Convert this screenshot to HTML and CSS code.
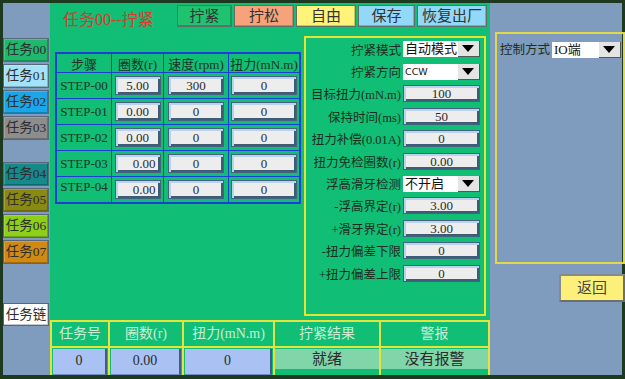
FILE: index.html
```html
<!DOCTYPE html>
<html lang="zh">
<head>
<meta charset="utf-8">
<title>任务00--拧紧</title>
<link rel="stylesheet" href="styles.css">
</head>
<body>
<div class="screen">
  <aside class="tasks">
    <div class="tab t00">任务00</div>
    <div class="tab t01">任务01</div>
    <div class="tab t02">任务02</div>
    <div class="tab t03">任务03</div>
    <div class="tab t04 group2">任务04</div>
    <div class="tab t05">任务05</div>
    <div class="tab t06">任务06</div>
    <div class="tab t07">任务07</div>
    <div class="tab chain">任务链</div>
  </aside>

  <main class="main">
    <header class="top">
      <h1 class="title">任务00--拧紧</h1>
      <nav class="modes">
        <div class="mode m-tight">拧紧</div>
        <div class="mode m-loose">拧松</div>
        <div class="mode m-free">自由</div>
        <div class="mode m-save">保存</div>
        <div class="mode m-reset">恢复出厂</div>
      </nav>
    </header>

    <section class="mid">
      <div class="steps">
        <div class="cell th">步骤</div>
        <div class="cell th">圈数(r)</div>
        <div class="cell th">速度(rpm)</div>
        <div class="cell th">扭力(mN.m)</div>

        <div class="cell step">STEP-00</div>
        <div class="cell"><div class="inp w-turn">5.00</div></div>
        <div class="cell"><div class="inp w-speed">300</div></div>
        <div class="cell"><div class="inp w-torque">0</div></div>

        <div class="cell step">STEP-01</div>
        <div class="cell"><div class="inp w-turn">0.00</div></div>
        <div class="cell"><div class="inp w-speed">0</div></div>
        <div class="cell"><div class="inp w-torque">0</div></div>

        <div class="cell step">STEP-02</div>
        <div class="cell"><div class="inp w-turn">0.00</div></div>
        <div class="cell"><div class="inp w-speed">0</div></div>
        <div class="cell"><div class="inp w-torque">0</div></div>

        <div class="cell step">STEP-03</div>
        <div class="cell"><div class="inp w-turn right">0.00</div></div>
        <div class="cell"><div class="inp w-speed">0</div></div>
        <div class="cell"><div class="inp w-torque">0</div></div>

        <div class="cell step top-al">STEP-04</div>
        <div class="cell"><div class="inp w-turn right">0.00</div></div>
        <div class="cell"><div class="inp w-speed">0</div></div>
        <div class="cell"><div class="inp w-torque">0</div></div>
      </div>

      <div class="settings">
        <span class="lbl">拧紧模式</span>
        <div class="sel">自动模式<span class="arr"></span></div>
        <span class="lbl">拧紧方向</span>
        <div class="sel small">CCW<span class="arr"></span></div>
        <span class="lbl">目标扭力(mN.m)</span>
        <div class="inp s">100</div>
        <span class="lbl">保持时间(ms)</span>
        <div class="inp s">50</div>
        <span class="lbl">扭力补偿(0.01A)</span>
        <div class="inp s">0</div>
        <span class="lbl">扭力免检圈数(r)</span>
        <div class="inp s">0.00</div>
        <span class="lbl">浮高滑牙检测</span>
        <div class="sel">不开启<span class="arr"></span></div>
        <span class="lbl">-浮高界定(r)</span>
        <div class="inp s">3.00</div>
        <span class="lbl">+滑牙界定(r)</span>
        <div class="inp s">3.00</div>
        <span class="lbl">-扭力偏差下限</span>
        <div class="inp s">0</div>
        <span class="lbl">+扭力偏差上限</span>
        <div class="inp s">0</div>
      </div>
    </section>

    <section class="status">
      <div class="sh">任务号</div>
      <div class="sh">圈数(r)</div>
      <div class="sh">扭力(mN.m)</div>
      <div class="sh">拧紧结果</div>
      <div class="sh">警报</div>
      <div class="sv"><div class="val blue">0</div></div>
      <div class="sv"><div class="val blue">0.00</div></div>
      <div class="sv"><div class="val blue">0</div></div>
      <div class="sv"><div class="val pale">就绪</div></div>
      <div class="sv"><div class="val pale">没有报警</div></div>
    </section>
  </main>

  <aside class="side">
    <div class="ctrl">
      <span class="lbl">控制方式</span>
      <div class="sel io">IO端<span class="arr"></span></div>
    </div>
    <div class="back">返回</div>
  </aside>
</div>
</body>
</html>
```

FILE: styles.css
```css
html, body {
  margin: 0;
  padding: 0;
}
body {
  width: 625px;
  height: 379px;
  overflow: hidden;
  font-family: "Liberation Serif", "Noto Sans CJK SC", serif;
  color: #2a2a2a;
}
.screen {
  box-sizing: border-box;
  width: 625px;
  height: 379px;
  border: 3px solid #1d3a20;
  border-bottom-width: 4px;
  display: flex;
  background: #7f9bbe;
}

/* left task tabs */
.tasks {
  width: 47px;
  flex: none;
  display: flex;
  flex-direction: column;
  gap: 2px;
  padding-top: 35px;
}
.tab {
  box-sizing: border-box;
  width: 46px;
  height: 24px;
  border: 1px solid #58687a;
  box-shadow: inset -1px -1px 0 rgba(0,0,0,.22), inset 1px 1px 0 rgba(255,255,255,.18);
  font-size: 13.5px;
  line-height: 22px;
  text-align: center;
  color: #2e2e2e;
  white-space: nowrap;
}
.t00 { background: #1fb86c; }
.t01 { background: #a2e3f9; }
.t02 { background: #1aa6e8; }
.t03 { background: #8d8d8d; }
.t04 { background: #148a8a; }
.t05 { background: #8a8a12; }
.t06 { background: #8cd01a; }
.t07 { background: #d08a14; }
.group2 { margin-top: 20px; }
.chain { background: #ffffff; margin-top: 37px; height: 23px; }

/* main green area */
.main {
  width: 440px;
  flex: none;
  background: #10be76;
  display: flex;
  flex-direction: column;
}
.top {
  height: 29px;
  display: flex;
  align-items: flex-start;
  padding-left: 13px;
  padding-right: 3px;
}
.title {
  margin: 7px 0 0;
  font-size: 16px;
  font-weight: normal;
  color: #d93a2a;
  line-height: 20px;
  white-space: nowrap;
}
.modes {
  margin-left: auto;
  margin-top: 2px;
  display: flex;
  gap: 2px;
}
.mode {
  box-sizing: border-box;
  height: 22px;
  border: 1px solid #5f6f68;
  box-shadow: inset -1px -1px 0 rgba(0,0,0,.2);
  font-size: 15px;
  line-height: 20px;
  text-align: center;
  color: #333;
}
.m-tight { width: 55px; background: #1fc26f; }
.m-loose { width: 60px; background: #f7a27b; }
.m-free  { width: 60px; background: #fff37a; }
.m-save  { width: 57px; background: #92d8f8; }
.m-reset { width: 70px; background: #92d8f8; }

.mid {
  height: 288px;
  display: flex;
  align-items: flex-start;
}

/* steps table */
.steps {
  margin: 20px 0 0 5px;
  display: grid;
  grid-template-columns: 54px 51px 64px 70px;
  grid-template-rows: 18px repeat(5, 25px);
  gap: 1px;
  border: 2px solid #1e3fd6;
  background: #1e3fd6;
}
.cell {
  background: #10be76;
  display: flex;
  align-items: center;
  justify-content: center;
  font-size: 13px;
  color: #1d3323;
  white-space: nowrap;
}
.th { font-size: 13px; }
.step { font-size: 13px; }
.top-al { align-items: flex-start; padding-top: 2px; }

.inp {
  box-sizing: border-box;
  height: 19px;
  background: #ededed;
  border: 1px solid #45627e;
  box-shadow: inset 2px 2px 0 #b9d3ec, inset -2px -2px 0 #3e5c76;
  font-size: 13px;
  line-height: 17px;
  text-align: center;
  color: #2a2a2a;
}
.w-turn { width: 46px; }
.w-speed { width: 56px; }
.w-torque { width: 66px; }
.right { text-align: right; padding-right: 4px; }

/* settings panel */
.settings {
  box-sizing: border-box;
  margin: 4px 4px 0 auto;
  width: 182px;
  height: 280px;
  border: 2px solid #e4e432;
  display: grid;
  grid-template-columns: 95px 77px;
  column-gap: 2px;
  grid-auto-rows: 22.4px;
  align-items: center;
  padding-top: 0;
}
.lbl {
  font-size: 12.5px;
  text-align: right;
  white-space: nowrap;
  color: #1c2e20;
}
.inp.s {
  width: 77px;
  height: 17px;
  line-height: 15px;
}
.sel {
  box-sizing: border-box;
  position: relative;
  height: 16px;
  background: #ffffff;
  font-size: 13px;
  line-height: 16px;
  padding-left: 2px;
  color: #111;
  white-space: nowrap;
}
.sel.small { font-family: "DejaVu Sans", sans-serif; font-size: 9.5px; }
.arr {
  position: absolute;
  right: 0;
  top: 0;
  box-sizing: border-box;
  width: 22px;
  height: 16px;
  background: #e4e4e4;
  border-right: 1px solid #555;
  border-bottom: 1px solid #555;
}
.arr::after {
  content: "";
  position: absolute;
  left: 4px;
  top: 4px;
  border-left: 6px solid transparent;
  border-right: 6px solid transparent;
  border-top: 7px solid #000;
}

/* bottom status */
.status {
  margin-top: auto;
  display: grid;
  grid-template-columns: 56px 72px 89px 104px 107px;
  grid-template-rows: 24px 27px;
  gap: 2px;
  padding: 2px 2px 0 2px;
  background: #e4e43a;
}
.sh, .sv { background: #10be76; }
.sh {
  font-size: 14px;
  line-height: 24px;
  text-align: center;
  color: #cdeed6;
  white-space: nowrap;
}
.sv { display: flex; flex-direction: column; }
.val {
  font-size: 14px;
  text-align: center;
  color: #2a2a2a;
  white-space: nowrap;
}
.val.blue {
  margin: 1px 1px 0;
  flex: 1;
  background: #a9c2f3;
  border-right: 2px solid #3d5c90;
  border-bottom: 1px solid #6f8cc4;
  line-height: 24px;
}
.val.pale {
  margin: 1px 0 0;
  height: 20px;
  line-height: 20px;
  background: #80d6a8;
  font-size: 15px;
}

/* right side */
.side {
  flex: 1;
  display: flex;
  flex-direction: column;
  padding: 29px 0 0 5px;
}
.ctrl {
  box-sizing: border-box;
  height: 232px;
  border: 2px solid #e0d848;
  display: flex;
  align-items: flex-start;
  gap: 2px;
  padding: 8px 2px 0 3px;
}
.ctrl .lbl { font-size: 12.5px; line-height: 16px; }
.sel.io { width: 69px; }
.back {
  box-sizing: border-box;
  align-self: flex-end;
  margin-top: 10px;
  width: 66px;
  height: 28px;
  background: #fdf07a;
  border: 2px solid #6e6e6e;
  border-top-color: #8a8a8a;
  border-left-color: #8a8a8a;
  font-size: 15px;
  line-height: 24px;
  text-align: center;
  color: #444;
}
```
